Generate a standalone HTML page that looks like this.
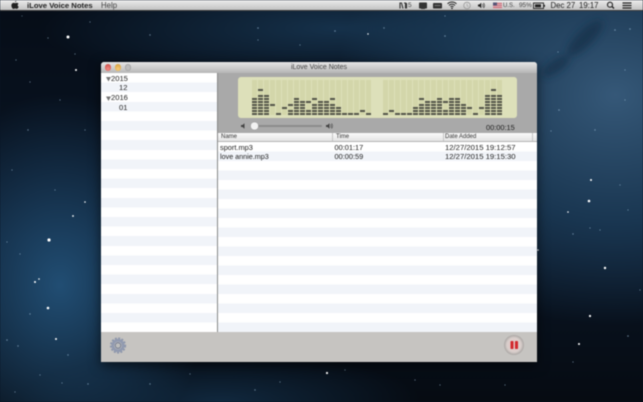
<!DOCTYPE html>
<html><head><meta charset="utf-8"><title>iLove Voice Notes</title>
<style>
html,body{margin:0;padding:0;background:#0a1524}
#s{position:relative;width:643px;height:402px;overflow:hidden;font-family:"Liberation Sans",sans-serif;color:#222;
background:
radial-gradient(ellipse 150px 190px at 60px 285px,rgba(36,84,124,.9),rgba(30,70,105,.45) 60%,rgba(30,70,105,0) 100%),
radial-gradient(ellipse 280px 230px at 615px 95px,rgba(56,92,125,.95),rgba(34,72,105,.65) 55%,rgba(25,55,85,0) 100%),
radial-gradient(ellipse 300px 60px at 340px 28px,rgba(28,64,96,.7),rgba(20,50,80,0) 100%),
radial-gradient(ellipse 200px 50px at 220px 402px,rgba(24,60,92,.6),rgba(20,50,80,0) 100%),
linear-gradient(180deg,#060d17,#0a1626 60%,#060b12)}
.a{position:absolute;white-space:nowrap}
#mb{position:absolute;left:0;top:0;width:643px;height:11px;background:linear-gradient(#ececec,#c2c2c2);border-bottom:1px solid #3a3a3a;box-sizing:border-box}
.m{font-size:8px;line-height:10px;top:1px;color:#222}
#w{position:absolute;left:101px;top:62px;width:436px;height:300px;background:#c6c4c1;border-radius:3px 3px 0 0;box-shadow:0 3px 12px rgba(0,0,0,.6);overflow:hidden}
#t{position:absolute;left:0;top:0;width:436px;height:11px;background:linear-gradient(#e6e6e6,#b6b6b6);font-size:7px;line-height:12px;text-align:center;color:#444}
.l{position:absolute;top:2px;width:6.500px;height:6.500px;border-radius:50%}
#sb{position:absolute;left:0;top:11px;width:116px;height:259px;background:repeating-linear-gradient(#fff 0,#fff 9.600px,#f1f4f9 9.600px,#f1f4f9 19.200px);border-right:1px solid #888}
#tb{position:absolute;left:117px;top:80px;width:319px;height:190px;background:repeating-linear-gradient(#fff 0,#fff 9.500px,#f1f4f9 9.500px,#f1f4f9 19px)}
#pn{position:absolute;left:117px;top:11px;width:319px;height:60px;background:#a9a9a9}
#h{position:absolute;left:117px;top:71px;width:319px;height:9px;background:linear-gradient(#fafafa,#e4e4e4);border-bottom:1px solid #b5b5b5;box-sizing:border-box;font-size:6px;line-height:9px;color:#333}
.v{position:absolute;top:0;width:1px;height:8px;background:#c4c4c4}
.r{font-size:7.400px;line-height:9.500px;color:#222}
.y{font-size:7.600px;line-height:9.600px;color:#222}
svg{position:absolute;left:0;top:0}
</style></head><body>
<div id="s" style="filter:blur(.4px)">
<svg width="643" height="402">
<defs><filter id="bl" x="-50%" y="-50%" width="200%" height="200%"><feGaussianBlur stdDeviation="4"/></filter></defs>
<g filter="url(#bl)" fill="#12304c" opacity=".8">
<ellipse cx="585" cy="38" rx="24" ry="8" transform="rotate(-45 585 38)"/>
<ellipse cx="556" cy="66" rx="16" ry="6" transform="rotate(-35 556 66)"/>
</g>
<g fill="#fff">
<circle cx="68" cy="37" r="1.500"/><circle cx="49" cy="240" r="1.600"/><circle cx="48" cy="308" r="1.300"/><circle cx="56" cy="339" r="1"/>
<circle cx="35" cy="282" r="1"/><circle cx="39" cy="279" r=".8"/><circle cx="73" cy="216" r=".9"/><circle cx="85" cy="202" r=".8"/>
<circle cx="76" cy="70" r="1"/><circle cx="368" cy="34" r=".6"/><circle cx="591" cy="180" r="1"/>
<circle cx="589" cy="201" r="1.300"/><circle cx="605" cy="268" r="1.200"/><circle cx="590" cy="316" r="1.100"/><circle cx="579" cy="344" r="1"/>
<circle cx="568" cy="212" r=".8"/><circle cx="538" cy="250" r=".8"/><circle cx="327" cy="373" r="1.100"/><circle cx="368" cy="34" r=".7"/>
</g>
<g fill="#9fc0da" opacity=".6">
<circle cx="16" cy="60" r=".6"/><circle cx="22" cy="16" r=".5"/><circle cx="48" cy="38" r=".6"/><circle cx="90" cy="22" r=".6"/><circle cx="150" cy="35" r=".7"/><circle cx="75" cy="54" r=".6"/><circle cx="30" cy="82" r=".6"/><circle cx="60" cy="100" r=".6"/><circle cx="28" cy="130" r=".7"/><circle cx="85" cy="130" r=".6"/><circle cx="12" cy="170" r=".6"/><circle cx="55" cy="190" r=".6"/><circle cx="7" cy="242" r=".6"/><circle cx="20" cy="254" r=".6"/><circle cx="30" cy="314" r=".7"/><circle cx="7" cy="340" r=".8"/><circle cx="18" cy="346" r=".7"/><circle cx="68" cy="355" r=".7"/><circle cx="88" cy="384" r=".7"/><circle cx="62" cy="383" r=".6"/><circle cx="40" cy="375" r=".6"/><circle cx="15" cy="392" r=".6"/>
<circle cx="258" cy="28" r=".8"/><circle cx="335" cy="31" r=".8"/><circle cx="384" cy="28" r=".7"/><circle cx="258" cy="40" r=".6"/><circle cx="300" cy="45" r=".6"/><circle cx="445" cy="36" r=".8"/><circle cx="445" cy="16" r=".6"/><circle cx="558" cy="52" r=".6"/><circle cx="615" cy="30" r=".8"/><circle cx="630" cy="29" r=".8"/><circle cx="559" cy="110" r=".8"/><circle cx="595" cy="130" r=".7"/><circle cx="625" cy="100" r=".6"/><circle cx="625" cy="70" r=".6"/><circle cx="551" cy="131" r=".6"/><circle cx="600" cy="230" r=".6"/><circle cx="620" cy="185" r=".6"/><circle cx="628" cy="210" r=".6"/><circle cx="573" cy="234" r=".7"/><circle cx="590" cy="228" r=".6"/><circle cx="640" cy="290" r=".6"/><circle cx="628" cy="336" r=".8"/><circle cx="573" cy="362" r=".6"/><circle cx="150" cy="384" r=".7"/><circle cx="190" cy="374" r=".6"/><circle cx="255" cy="390" r=".7"/><circle cx="280" cy="382" r=".6"/><circle cx="345" cy="370" r=".6"/><circle cx="415" cy="380" r=".6"/><circle cx="440" cy="385" r=".6"/><circle cx="505" cy="385" r=".6"/>
</g>
</svg>

<div id="mb"></div>
<svg width="20" height="11" style="left:9px"><path d="M6 2.200c.7-.2 1.200-.7 1.400-1.600-.9.2-1.500.8-1.400 1.600zM3.900 3c1-.4 1.600.2 2.100.2S7.500 2.600 8.500 3c.4.1.8.4 1 .8-1.200.8-1 2.500.2 3-.4 1-1 2-1.800 2.100-.6 0-.9-.4-1.700-.4s-1.100.4-1.700.4C3.400 8.900 2.400 7 2.400 5.500 2.400 4.100 3.100 3.300 3.900 3z" fill="#222"/></svg>
<div class="a m" style="left:27px;font-weight:bold;font-size:7.700px">iLove Voice Notes</div>
<div class="a m" style="left:101px;color:#444;font-size:7.800px">Help</div>

<svg width="643" height="11">
<path d="M400 8.500V3h1.500L403 8.500M404 3h1.500v5.500M406.500 3v5.500" stroke="#333" stroke-width="1.100" fill="none"/>
<rect x="419" y="2.500" width="8" height="6" rx=".8" fill="#333"/><rect x="421" y="8" width="4" height="1" fill="#333"/>
<rect x="433" y="3" width="9" height="5.500" rx=".8" fill="#333"/><rect x="434.500" y="5" width="6" height="1" fill="#777"/>
<path d="M447.500 3.800a6.500 6.500 0 0 1 9 0M449 5.400a4.300 4.300 0 0 1 6 0M450.500 6.900a2.100 2.100 0 0 1 3 0" stroke="#222" stroke-width="1" fill="none"/><circle cx="452" cy="8.300" r=".8" fill="#222"/>
<circle cx="467" cy="5.500" r="3.300" fill="none" stroke="#999" stroke-width=".8"/><path d="M467 3.500v2l1.300 1" stroke="#999" stroke-width=".6" fill="none"/>
<path d="M478 4.500h1.300l2-1.700v5.400l-2-1.700H478z" fill="#222"/><path d="M482.500 4a2 2 0 0 1 0 3M483.500 3a3.500 3.500 0 0 1 0 5" stroke="#222" stroke-width=".6" fill="none"/>
<rect x="493" y="2.500" width="9" height="6" fill="#d8a8b8"/><path d="M493 3.500h9M493 5.500h9M493 7.500h9" stroke="#c66" stroke-width=".8"/><rect x="493" y="2.500" width="4" height="3" fill="#557"/>
<rect x="533.500" y="3" width="10" height="5.500" fill="none" stroke="#222" stroke-width=".9"/><rect x="535" y="4.300" width="6" height="3" fill="#222"/><rect x="544" y="4.800" width="1" height="2" fill="#222"/>
<circle cx="610" cy="4.700" r="2.500" fill="none" stroke="#222" stroke-width="1.100"/><path d="M612 6.500l2 2" stroke="#222" stroke-width="1.300"/>
<path d="M622.500 3h9M622.500 5.500h9M622.500 8h9" stroke="#222" stroke-width="1.300"/>
</svg>
<div class="a m" style="left:408px;font-size:6.500px;color:#444">5</div>
<div class="a m" style="left:503px;font-size:6px;color:#444">U.S.</div>
<div class="a m" style="left:519px;font-size:6.400px;color:#444">95%</div>
<div class="a m" style="left:550.500px;font-size:7.800px;color:#222">Dec 27</div>
<div class="a m" style="left:579px;font-size:7.800px;color:#222">19:17</div>

<div id="w">
<div id="t">iLove Voice Notes</div>
<div class="l" style="left:3.700px;background:radial-gradient(circle at 50% 70%,#f08a84,#c8453f)"></div>
<div class="l" style="left:13.700px;background:radial-gradient(circle at 50% 70%,#f6ca78,#cf9a35)"></div>
<div class="l" style="left:23.700px;background:#bcbcbc;box-shadow:inset 0 0 0 1px #a8a8a8"></div>
<div id="sb"></div><div id="pn"></div>
<div id="tb"></div>
<div id="h">
<div class="a" style="left:3px;top:0">Name</div><div class="v" style="left:114px"></div>
<div class="a" style="left:118px;top:0">Time</div><div class="v" style="left:225px"></div>
<div class="a" style="left:227px;top:0">Date Added</div><div class="v" style="left:314px"></div>
</div>

<svg width="436" height="300" style="left:0;top:0">
<path d="M5 15h5l-2.500 4.500zM5 34.500h5l-2.500 4.500z" fill="#777"/>
</svg>
<div class="a y" style="left:10px;top:11.500px">2015</div>
<div class="a y" style="left:18px;top:21px">12</div>
<div class="a y" style="left:10px;top:31px">2016</div>
<div class="a y" style="left:18px;top:40.500px">01</div>

<div class="a r" style="left:119px;top:80.500px">sport.mp3</div>
<div class="a r" style="left:233.500px;top:80.500px">00:01:17</div>
<div class="a r" style="left:344px;top:80.500px;font-size:7.700px">12/27/2015 19:12:57</div>
<div class="a r" style="left:119px;top:90px;font-size:7.200px">love annie.mp3</div>
<div class="a r" style="left:233.500px;top:90px">00:00:59</div>
<div class="a r" style="left:344px;top:90px;font-size:7.700px">12/27/2015 19:15:30</div>

<div class="a" style="left:385px;top:60.500px;font-size:7.400px;line-height:9px;color:#222">00:00:15</div>

<svg width="436" height="300" style="left:-101px;top:-62px;overflow:visible">
<defs>
<pattern id="d" patternUnits="userSpaceOnUse" x="0" y="2" width="6" height="3"><rect width="6" height="2" fill="#54554a"/></pattern>
</defs>
<rect x="238" y="77" width="279" height="41" rx="3" fill="#dde0ba"/>
<g fill="#d3d6aa">
<path d="M252 80h5v35h-5zM258 80h5v35h-5zM264 80h5v35h-5zM270 80h5v35h-5zM276 80h5v35h-5zM282 80h5v35h-5zM288 80h5v35h-5zM294 80h5v35h-5zM300 80h5v35h-5zM306 80h5v35h-5zM312 80h5v35h-5zM318 80h5v35h-5zM324 80h5v35h-5zM330 80h5v35h-5zM336 80h5v35h-5zM342 80h5v35h-5zM348 80h5v35h-5zM354 80h5v35h-5zM360 80h5v35h-5zM366 80h5v35h-5z"/>
<path d="M383 80h5v35h-5zM389 80h5v35h-5zM395 80h5v35h-5zM401 80h5v35h-5zM407 80h5v35h-5zM413 80h5v35h-5zM419 80h5v35h-5zM425 80h5v35h-5zM431 80h5v35h-5zM437 80h5v35h-5zM443 80h5v35h-5zM449 80h5v35h-5zM455 80h5v35h-5zM461 80h5v35h-5zM467 80h5v35h-5zM473 80h5v35h-5zM479 80h5v35h-5zM485 80h5v35h-5zM491 80h5v35h-5zM497 80h5v35h-5z"/>
</g>
<path fill="url(#d)" d="M252 98h5v17h-5zM258 95h5v20h-5zM264 98h5v17h-5zM288 110h5v5h-5zM294 101h5v14h-5zM300 104h5v11h-5zM306 110h5v5h-5zM312 104h5v11h-5zM318 104h5v11h-5zM324 104h5v11h-5zM330 104h5v11h-5zM336 110h5v5h-5z
M413 110h5v5h-5zM419 104h5v11h-5zM425 104h5v11h-5zM431 104h5v11h-5zM437 101h5v14h-5zM443 110h5v5h-5zM449 101h5v14h-5zM455 101h5v14h-5zM461 107h5v8h-5zM485 98h5v17h-5zM491 95h5v20h-5zM497 98h5v17h-5z"/>
<path fill="#54554a" d="M258 89h5v2h-5zM264 95h5v2h-5zM270 104h5v2h-5zM276 113h5v2h-5zM282 107h5v2h-5zM288 104h5v2h-5zM294 98h5v2h-5zM300 101h5v2h-5zM306 101h5v2h-5zM312 98h5v2h-5zM318 101h5v2h-5zM324 101h5v2h-5zM330 98h5v2h-5zM336 107h5v2h-5zM342 113h5v2h-5zM348 113h5v2h-5zM354 113h5v2h-5zM360 110h5v2h-5zM366 113h5v2h-5z
M383 113h5v2h-5zM389 110h5v2h-5zM395 113h5v2h-5zM401 113h5v2h-5zM407 113h5v2h-5zM413 107h5v2h-5zM419 98h5v2h-5zM425 101h5v2h-5zM431 101h5v2h-5zM437 98h5v2h-5zM443 101h5v2h-5zM449 98h5v2h-5zM455 98h5v2h-5zM461 104h5v2h-5zM467 107h5v2h-5zM473 113h5v2h-5zM479 107h5v2h-5zM485 95h5v2h-5zM491 89h5v2h-5zM497 95h5v2h-5z"/>

<rect x="256" y="125" width="66" height="2" rx="1" fill="#8c8c8c"/>
<circle cx="254.500" cy="126" r="4" fill="#f2f2f2" stroke="#999" stroke-width=".5"/>
<path d="M241 125h1.500l2-1.700v5.400l-2-1.700H241z" fill="#444"/>
<path d="M326 125h1.500l2-1.700v5.400l-2-1.700H326z" fill="#444"/><path d="M330.500 124.500a2 2 0 0 1 0 3M331.500 123.500a3.500 3.500 0 0 1 0 5" stroke="#444" stroke-width=".6" fill="none"/>

<g transform="translate(118 345.500)">
<circle r="6.800" fill="none" stroke="#8d96ab" stroke-width="2.600" stroke-dasharray="1.900 1.300"/>
<circle r="5.200" fill="none" stroke="#919ab0" stroke-width="2.800"/>
<circle r="2.800" fill="#bdbdbc" stroke="#667089" stroke-width=".8"/>
</g>
<defs><radialGradient id="pb"><stop offset="0" stop-color="#e6c4c2"/><stop offset=".7" stop-color="#d9cfcc"/><stop offset="1" stop-color="#a9a5a3"/></radialGradient></defs>
<circle cx="514" cy="345" r="10" fill="url(#pb)"/>
<rect x="510.500" y="341" width="3" height="8" rx=".8" fill="#d22a2e"/>
<rect x="515" y="341" width="3" height="8" rx=".8" fill="#d22a2e"/>
</svg>
</div>
</div>
</body></html>
